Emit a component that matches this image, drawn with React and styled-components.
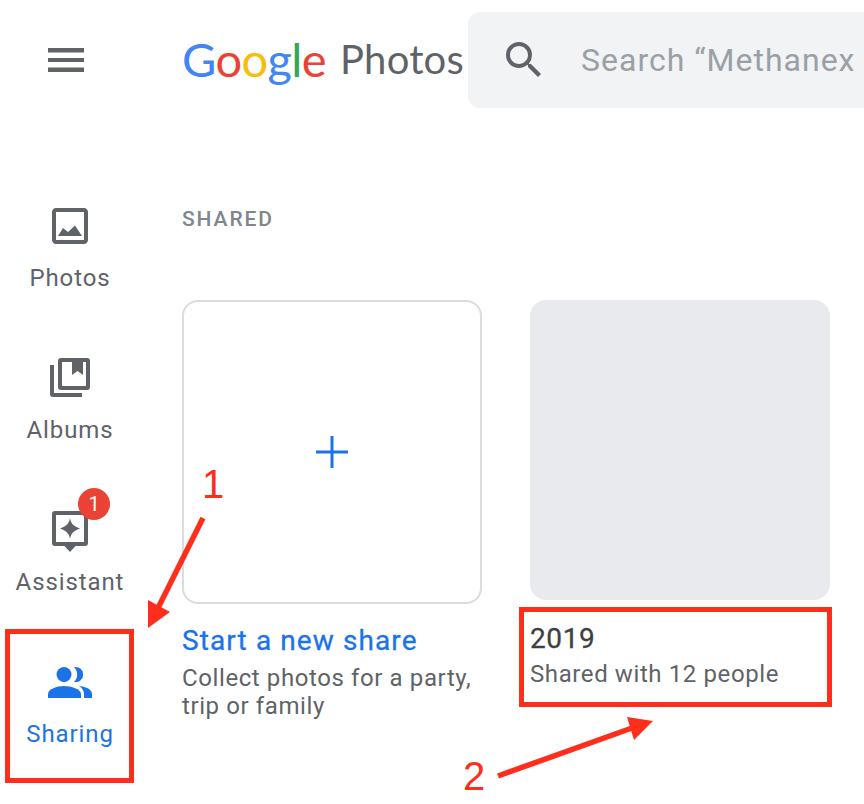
import React from "react";
import styled, { createGlobalStyle } from "styled-components";

const Global = createGlobalStyle`
  html, body { margin: 0; padding: 0; background: #fff; overflow: hidden; }
  * { box-sizing: border-box; }
  body { font-family: Roboto, "Liberation Sans", sans-serif; }
`;
const Page = styled.div`
  position: relative; width: 864px; height: 804px; overflow: hidden; background: #fff;
`;
const Header = styled.header`
  display: flex; align-items: flex-start; height: 120px; padding-top: 12px;
`;
const MenuSlot = styled.div`
  width: 140px; height: 96px; flex: none; display: flex; align-items: center; justify-content: center;
  padding-right: 8px; color: #5f6368;
`;
const Logo = styled.div`
  width: 286px; margin-left: 42px; height: 96px; flex: none; display: flex; align-items: center; gap: 14px; padding-bottom: 2px;
`;
const GoogleWord = styled.span`
  font-family: Lato, sans-serif; font-size: 47px; letter-spacing: -0.6px; line-height: 1; font-weight: 400;
`;
const Letter = styled.span`color: ${p => p.$c};`;
const PhotosWord = styled.span`
  font-family: Lato, sans-serif; font-size: 40px; color: #5f6368; letter-spacing: 0.2px; line-height: 1;
`;
const SearchBar = styled.div`
  flex: 1; height: 96px; background: #f1f3f4; border-radius: 12px 0 0 12px; display: flex; align-items: center;
  padding-left: 32px; gap: 33px; overflow: hidden; color: #5f6368; min-width: 0;
`;
const SearchText = styled.span`
  font-family: Roboto, sans-serif; font-size: 32px; color: #9aa0a6; white-space: nowrap; letter-spacing: 1px;
`;
const Body = styled.div`display: flex;`;
const Sidebar = styled.nav`
  width: 140px; flex: none; display: flex; flex-direction: column; gap: 60px; padding-top: 82px;
`;
const NavItem = styled.div`
  position: relative; display: flex; flex-direction: column; align-items: center; gap: 12px;
  color: ${p => (p.$active ? "#1a73e8" : "#5f6368")};
`;
const NavIcon = styled.div`position: relative; width: 48px; height: 48px;`;
const NavLabel = styled.span`
  font-size: 24px; line-height: 32px; font-weight: 400; letter-spacing: 0.9px;
`;
const Badge = styled.span`
  position: absolute; left: 32px; top: -18px; width: 32px; height: 32px; border-radius: 50%;
  background: #ea4335; color: #fff; font-size: 20px; line-height: 32px; text-align: center;
`;
const Main = styled.main`flex: 1; padding: 82px 0 0 42px; min-width: 0;`;
const SectionTitle = styled.h2`
  margin: 0; font-size: 21px; line-height: 34px; font-weight: 500; letter-spacing: 1.9px; color: #80868b;
`;
const Cards = styled.div`display: flex; gap: 48px; margin-top: 64px;`;
const Card = styled.div`width: 300px; flex: none;`;
const NewTile = styled.div`
  width: 300px; height: 304px; border: 2px solid #dadce0; border-radius: 16px;
  display: flex; align-items: center; justify-content: center; color: #1a73e8;
`;
const AlbumTile = styled.div`
  width: 300px; height: 300px; background: #e8eaed; border-radius: 16px;
`;
const NewTitle = styled.div`
  margin-top: 20px; font-size: 28px; line-height: 34px; font-weight: 400; letter-spacing: 1.1px; color: #1a73e8;
  -webkit-text-stroke: 0.3px #1a73e8;
`;
const NewDesc = styled.div`
  margin-top: 6px; font-size: 24px; line-height: 28px; letter-spacing: 0.6px; color: #5f6368;
`;
const AlbumTitle = styled.div`
  margin-top: 22px; font-size: 28px; line-height: 34px; font-weight: 400; letter-spacing: 0.6px; color: #3c4043;
  -webkit-text-stroke: 0.3px #3c4043;
`;
const AlbumSub = styled.div`
  margin-top: 4px; font-size: 24px; line-height: 28px; letter-spacing: 0.6px; color: #5f6368;
`;
const Callout = styled.div`
  position: absolute; left: ${p => p.$x}px; top: ${p => p.$y}px; width: ${p => p.$w}px; height: ${p => p.$h}px;
  border: 5px solid #ff2d1c; pointer-events: none;
`;
const CalloutNumber = styled.span`
  position: absolute; left: ${p => p.$x}px; top: ${p => p.$y}px; font-family: "Liberation Sans", sans-serif;
  font-size: 40px; line-height: 40px; color: #ff2d1c;
`;
const Arrows = styled.svg`position: absolute; inset: 0; width: 864px; height: 804px; pointer-events: none;`;

const MenuIcon = () => (
  <svg width="36" height="24" viewBox="0 0 36 24" fill="currentColor" style={{ marginTop: "-1px" }}>
    <rect y="0" width="36" height="4.5" /><rect y="10" width="36" height="4" /><rect y="19.5" width="36" height="4.5" />
  </svg>
);
const SearchIcon = () => (
  <svg width="48" height="48" viewBox="0 0 24 24" fill="currentColor">
    <path d="M15.5 14h-.79l-.28-.27A6.47 6.47 0 0 0 16 9.5 6.5 6.5 0 1 0 9.5 16c1.61 0 3.09-.59 4.23-1.57l.27.28v.79l5 4.99L20.49 19l-4.99-5zm-6 0C7.01 14 5 11.99 5 9.5S7.01 5 9.5 5 14 7.01 14 9.5 11.99 14 9.5 14z" />
  </svg>
);
const PhotoIcon = () => (
  <svg width="48" height="48" viewBox="0 0 24 24" fill="currentColor">
    <path d="M19 5v14H5V5h14m0-2H5c-1.1 0-2 .9-2 2v14c0 1.1.9 2 2 2h14c1.1 0 2-.9 2-2V5c0-1.1-.9-2-2-2z" />
    <path d="M6 17l2.5-4 2.5 2 3.500-3.200L18 17z" />
  </svg>
);
const AlbumIcon = () => (
  <svg width="48" height="48" viewBox="0 0 48 48" fill="currentColor">
    <path fillRule="evenodd" d="M15 4h26a3 3 0 0 1 3 3v26a3 3 0 0 1-3 3H15a3 3 0 0 1-3-3V7a3 3 0 0 1 3-3zm1 4v24h24V8h-3v13l-5.500-4-5.500 4V8z" />
    <path d="M4 11h4v28h28v4H7a3 3 0 0 1-3-3z" />
  </svg>
);
const AssistantIcon = () => (
  <svg width="48" height="48" viewBox="0 0 48 48" fill="currentColor">
    <path fillRule="evenodd" d="M9 5h30a3 3 0 0 1 3 3v29a3 3 0 0 1-3 3h-9.500L24 46l-5.500-6H9a3 3 0 0 1-3-3V8a3 3 0 0 1 3-3zm1 4v27h28V9z" />
    <path d="M24 12c1 5.500 3 8 10 10.500-7 2.500-9 5-10 10.500-1-5.500-3-8-10-10.500 7-2.500 9-5 10-10.500z" />
  </svg>
);
const PeopleIcon = () => (
  <svg width="48" height="48" viewBox="0 0 48 48" fill="currentColor">
    <circle cx="18" cy="16.500" r="7.500" />
    <path d="M2 40v-4c0-5 9-8 16-8s17 3 17 8v4z" />
    <path d="M28 9.200a7.500 7.500 0 1 1 0 14.600 10 10 0 0 0 0-14.600z" />
    <path d="M33 28c6 .5 13 3 13 8v4h-8v-4c0-3.500-2-6-5-8z" />
  </svg>
);
const PlusIcon = () => (
  <svg width="34" height="34" viewBox="0 0 34 34" fill="currentColor">
    <rect x="15.500" y="1" width="3" height="32" /><rect x="1" y="15.500" width="32" height="3" />
  </svg>
);

const logo = [["G", "#4285f4"], ["o", "#ea4335"], ["o", "#fbbc05"], ["g", "#4285f4"], ["l", "#34a853"], ["e", "#ea4335"]];

export default function App() {
  return (
    <Page>
      <Global />
      <Header>
        <MenuSlot><MenuIcon /></MenuSlot>
        <Logo>
          <GoogleWord>{logo.map(([l, c], i) => <Letter key={i} $c={c}>{l}</Letter>)}</GoogleWord>
          <PhotosWord>Photos</PhotosWord>
        </Logo>
        <SearchBar>
          <SearchIcon />
          <SearchText>Search “Methanex</SearchText>
        </SearchBar>
      </Header>
      <Body>
        <Sidebar>
          <NavItem><NavIcon><PhotoIcon /></NavIcon><NavLabel>Photos</NavLabel></NavItem>
          <NavItem><NavIcon><AlbumIcon /></NavIcon><NavLabel>Albums</NavLabel></NavItem>
          <NavItem>
            <NavIcon><AssistantIcon /><Badge>1</Badge></NavIcon>
            <NavLabel>Assistant</NavLabel>
          </NavItem>
          <NavItem $active><NavIcon><PeopleIcon /></NavIcon><NavLabel>Sharing</NavLabel></NavItem>
        </Sidebar>
        <Main>
          <SectionTitle>SHARED</SectionTitle>
          <Cards>
            <Card>
              <NewTile><PlusIcon /></NewTile>
              <NewTitle>Start a new share</NewTitle>
              <NewDesc>Collect photos for a party, trip or family</NewDesc>
            </Card>
            <Card>
              <AlbumTile />
              <AlbumTitle>2019</AlbumTitle>
              <AlbumSub>Shared with 12 people</AlbumSub>
            </Card>
          </Cards>
        </Main>
      </Body>
      <Callout $x={5} $y={629} $w={129} $h={154} />
      <Callout $x={519} $y={607} $w={313} $h={100} />
      <Arrows viewBox="0 0 864 804">
        <line x1="203" y1="518" x2="158" y2="608" stroke="#ff2d1c" strokeWidth="5.500" />
        <polygon points="148,628 148,600 170,612" fill="#ff2d1c" />
        <line x1="498" y1="776" x2="632" y2="728" stroke="#ff2d1c" strokeWidth="5.500" />
        <polygon points="653,721 627,717 634,740" fill="#ff2d1c" />
      </Arrows>
      <CalloutNumber $x={202} $y={464}>1</CalloutNumber>
      <CalloutNumber $x={463} $y={756}>2</CalloutNumber>
    </Page>
  );
}
